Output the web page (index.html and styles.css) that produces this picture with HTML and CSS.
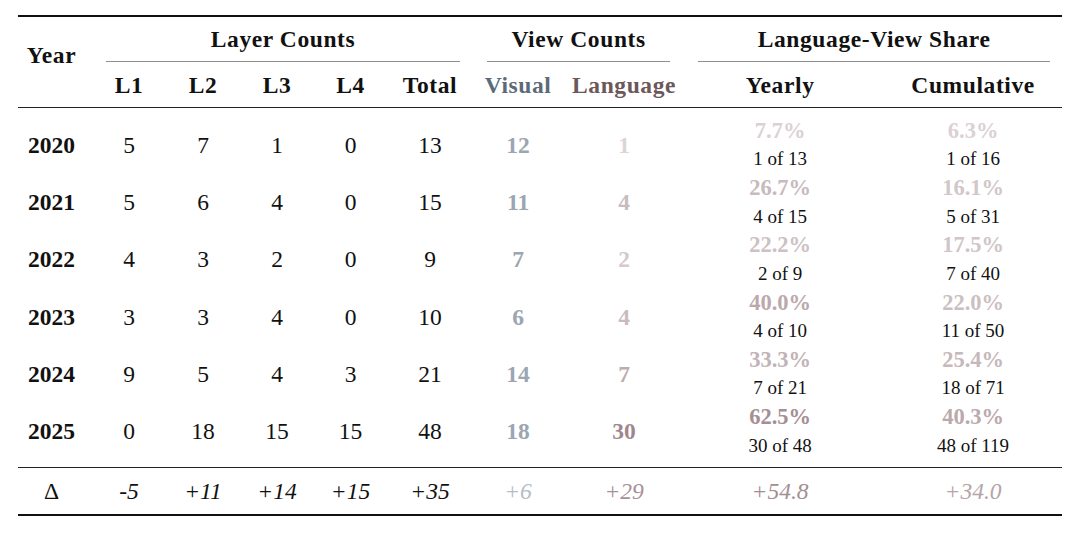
FILE: index.html
```html
<!DOCTYPE html>
<html lang="en">
<head>
<meta charset="utf-8">
<title>Layer and View Counts</title>
<link rel="stylesheet" href="styles.css">
</head>
<body>
<div class="page">
<table class="stats">
  <colgroup>
    <col class="c-year">
    <col class="c-l1">
    <col class="c-l2">
    <col class="c-l3">
    <col class="c-l4">
    <col class="c-total">
    <col class="c-vis">
    <col class="c-lang">
    <col class="c-yearly">
    <col class="c-cum">
  </colgroup>
  <thead>
    <tr class="groups">
      <th rowspan="2" class="year-head">Year</th>
      <th colspan="5" class="grp"><div class="grp-label grp-layer">Layer Counts</div></th>
      <th colspan="2" class="grp"><div class="grp-label grp-view">View Counts</div></th>
      <th colspan="2" class="grp"><div class="grp-label grp-share">Language-View Share</div></th>
    </tr>
    <tr class="subs">
      <th>L1</th>
      <th>L2</th>
      <th>L3</th>
      <th>L4</th>
      <th>Total</th>
      <th class="vis-head">Visual</th>
      <th class="lang-head">Language</th>
      <th>Yearly</th>
      <th class="cum">Cumulative</th>
    </tr>
  </thead>
  <tbody>
    <tr class="first">
      <th class="yr">2020</th><td>5</td><td>7</td><td>1</td><td>0</td><td>13</td>
      <td class="vis">12</td><td class="lang" style="color:#ddd4d6">1</td>
      <td class="share"><div class="pct" style="color:#dbd1d3">7.7%</div><div class="of">1 of 13</div></td>
      <td class="share cum"><div class="pct" style="color:#dbd1d3">6.3%</div><div class="of">1 of 16</div></td>
    </tr>
    <tr>
      <th class="yr">2021</th><td>5</td><td>6</td><td>4</td><td>0</td><td>15</td>
      <td class="vis">11</td><td class="lang" style="color:#c9bcbf">4</td>
      <td class="share"><div class="pct" style="color:#c8babd">26.7%</div><div class="of">4 of 15</div></td>
      <td class="share cum"><div class="pct" style="color:#d2c7c9">16.1%</div><div class="of">5 of 31</div></td>
    </tr>
    <tr>
      <th class="yr">2022</th><td>4</td><td>3</td><td>2</td><td>0</td><td>9</td>
      <td class="vis">7</td><td class="lang" style="color:#d4cacc">2</td>
      <td class="share"><div class="pct" style="color:#cdc1c3">22.2%</div><div class="of">2 of 9</div></td>
      <td class="share cum"><div class="pct" style="color:#d1c5c7">17.5%</div><div class="of">7 of 40</div></td>
    </tr>
    <tr>
      <th class="yr">2023</th><td>3</td><td>3</td><td>4</td><td>0</td><td>10</td>
      <td class="vis">6</td><td class="lang" style="color:#c9bcbf">4</td>
      <td class="share"><div class="pct" style="color:#bba9ac">40.0%</div><div class="of">4 of 10</div></td>
      <td class="share cum"><div class="pct" style="color:#cbbfc1">22.0%</div><div class="of">11 of 50</div></td>
    </tr>
    <tr>
      <th class="yr">2024</th><td>9</td><td>5</td><td>4</td><td>3</td><td>21</td>
      <td class="vis">14</td><td class="lang" style="color:#bdadb0">7</td>
      <td class="share"><div class="pct" style="color:#c2b3b6">33.3%</div><div class="of">7 of 21</div></td>
      <td class="share cum"><div class="pct" style="color:#c6b8bb">25.4%</div><div class="of">18 of 71</div></td>
    </tr>
    <tr class="last">
      <th class="yr">2025</th><td>0</td><td>18</td><td>15</td><td>15</td><td>48</td>
      <td class="vis">18</td><td class="lang" style="color:#9f888c">30</td>
      <td class="share"><div class="pct" style="color:#a58f93">62.5%</div><div class="of">30 of 48</div></td>
      <td class="share cum"><div class="pct" style="color:#bba9ac">40.3%</div><div class="of">48 of 119</div></td>
    </tr>
  </tbody>
  <tfoot>
    <tr class="delta">
      <th class="delta-sym">Δ</th><td>-5</td><td>+11</td><td>+14</td><td>+15</td><td>+35</td>
      <td class="d-vis">+6</td><td style="color:#a69195">+29</td>
      <td style="color:#a48e92">+54.8</td>
      <td class="cum" style="color:#b5a4a7">+34.0</td>
    </tr>
  </tfoot>
</table>
</div>
</body>
</html>
```

FILE: styles.css
```css
body {
  margin: 0;
  background: #ffffff;
  color: #111111;
  font-family: "Liberation Serif", "Times New Roman", serif;
}

.page {
  padding: 15px 18px 0 18px;
}

.stats {
  border-collapse: separate;
  border-spacing: 0;
  table-layout: fixed;
  width: 1044px;
}

.c-year { width: 67px; }
.c-l1 { width: 88px; }
.c-l2 { width: 60px; }
.c-l3 { width: 88px; }
.c-l4 { width: 59px; }
.c-total { width: 100px; }
.c-vis { width: 76px; }
.c-lang { width: 136px; }
.c-yearly { width: 176px; }
.c-cum { width: 194px; }

.stats th,
.stats td {
  padding: 0;
  text-align: center;
  vertical-align: top;
  font-size: 23.5px;
  white-space: nowrap;
}

/* header */
.groups th {
  border-top: 2px solid #111;
  font-weight: bold;
  letter-spacing: 0.6px;
}

.stats .year-head {
  border-bottom: 1px solid #222;
  padding-top: 24px;
  line-height: 28px;
}

.grp-label {
  padding-top: 7.7px;
  padding-bottom: 8.8px;
  line-height: 28px;
  border-bottom: 1px solid #8f8f8f;
}

.grp-layer { margin: 0 20px 0 21px; }
.grp-view { margin: 0 22px 0 7px; }
.grp-share { margin: 0 12px 0 6px; }

.stats .subs th {
  padding-top: 8.5px;
  padding-bottom: 8px;
  line-height: 28px;
  border-bottom: 1px solid #222;
  font-weight: bold;
  letter-spacing: 0.6px;
}

.subs .vis-head { color: #5b6b7a; }
.subs .lang-head { color: #6c575a; }

.stats .cum { padding-left: 16px; }
.stats .subs th.cum { padding-left: 16px; }

/* body */
.stats tbody th,
.stats tbody td {
  line-height: 57.24px;
  font-weight: normal;
}

.stats tbody .yr { font-weight: bold; }

.stats tbody .vis {
  color: #9ba6b2;
  font-weight: bold;
}

.stats tbody .lang { font-weight: bold; }

.stats tbody .share { line-height: 28.62px; }

.pct {
  font-size: 22.5px;
  font-weight: bold;
  line-height: 28.62px;
}

.of {
  font-size: 19px;
  line-height: 28.62px;
  color: #111;
}

.stats tbody tr.first th,
.stats tbody tr.first td { padding-top: 8.8px; }

.stats tbody tr.last th,
.stats tbody tr.last td { padding-bottom: 6.4px; }

.stats tbody tr.first td.cum,
.stats tbody tr.last td.cum { padding-left: 16px; }

/* footer */
.delta th,
.delta td {
  border-top: 1px solid #222;
  border-bottom: 2px solid #111;
  line-height: 46px;
  font-style: italic;
}

.delta .delta-sym {
  font-style: normal;
  font-weight: normal;
}

.delta .d-vis { color: #b6bec7; }
```
